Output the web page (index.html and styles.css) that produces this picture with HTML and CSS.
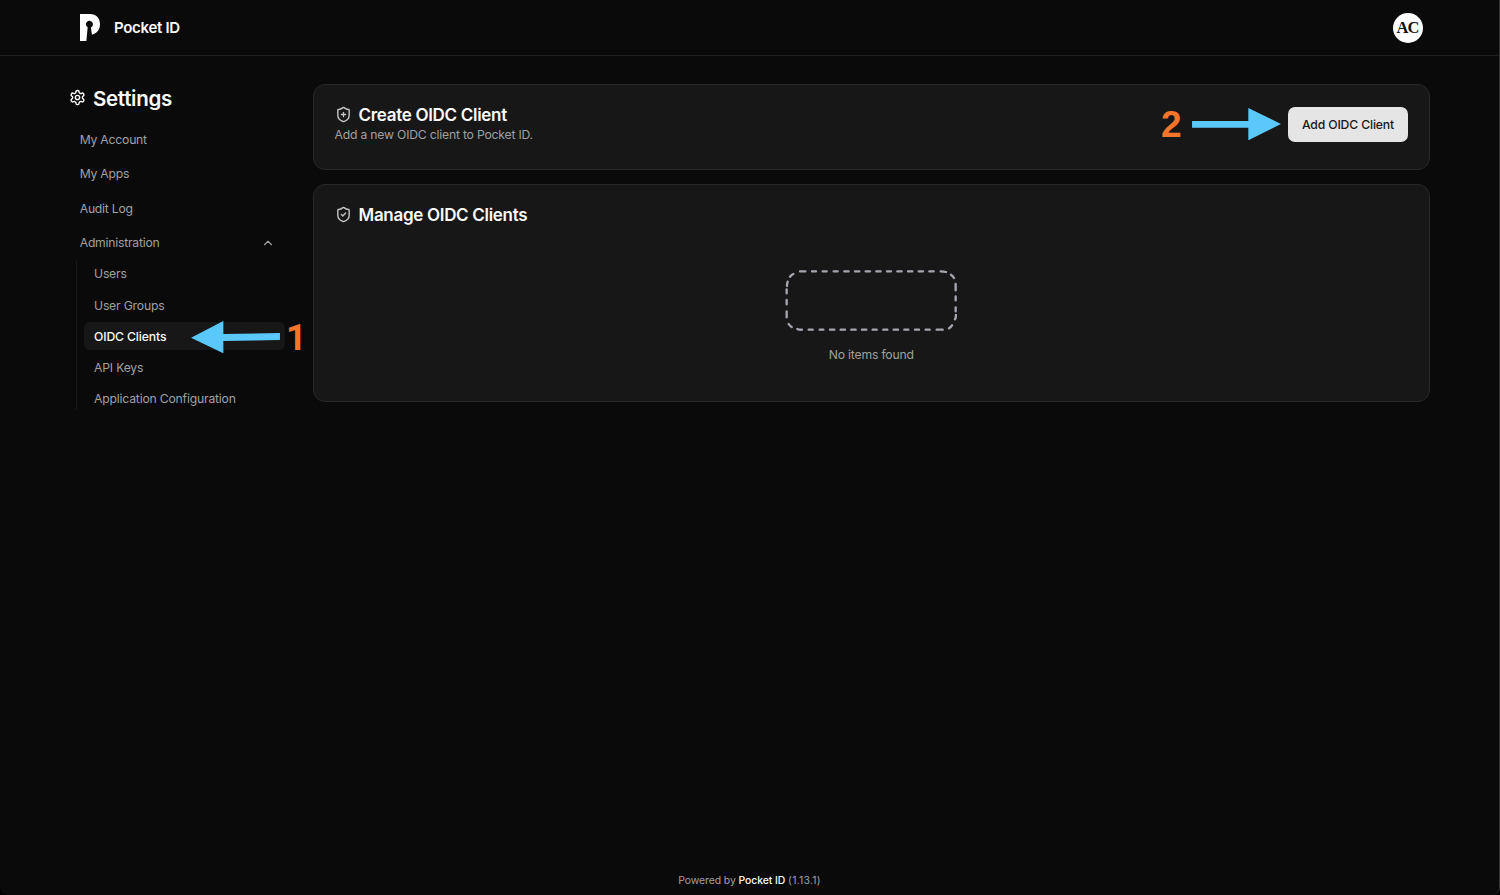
FILE: index.html
```html
<!DOCTYPE html>
<html lang="en">
<head>
<meta charset="utf-8">
<title>Pocket ID</title>
<link rel="stylesheet" href="styles.css">
</head>
<body>
<div class="app">
  <header class="topbar">
    <div class="brand">
      <svg class="logo" viewBox="0 0 60 82"><path fill="#fff" d="M0 0H29C50 0 60 13 60 31C60 47 51 59 36 62L32.500 40.500A10.500 10.500 0 1 0 23 40L19 82H0Z"/></svg>
      <span>Pocket ID</span>
    </div>
    <div class="avatar">AC</div>
  </header>
  <main class="content">
    <aside class="sidebar">
      <h1 class="heading">
        <svg class="icon gear" viewBox="0 0 24 24"><path d="M12.220 2h-.44a2 2 0 0 0-2 2v.18a2 2 0 0 1-1 1.730l-.43.25a2 2 0 0 1-2 0l-.15-.08a2 2 0 0 0-2.730.73l-.22.38a2 2 0 0 0 .73 2.730l.15.1a2 2 0 0 1 1 1.720v.51a2 2 0 0 1-1 1.740l-.15.09a2 2 0 0 0-.73 2.730l.22.38a2 2 0 0 0 2.730.73l.15-.08a2 2 0 0 1 2 0l.43.25a2 2 0 0 1 1 1.730V20a2 2 0 0 0 2 2h.44a2 2 0 0 0 2-2v-.18a2 2 0 0 1 1-1.730l.43-.25a2 2 0 0 1 2 0l.15.08a2 2 0 0 0 2.730-.73l.22-.39a2 2 0 0 0-.73-2.730l-.15-.08a2 2 0 0 1-1-1.740v-.5a2 2 0 0 1 1-1.740l.15-.09a2 2 0 0 0 .73-2.730l-.22-.38a2 2 0 0 0-2.730-.73l-.15.08a2 2 0 0 1-2 0l-.43-.25a2 2 0 0 1-1-1.730V4a2 2 0 0 0-2-2z"/><circle cx="12" cy="12" r="3"/></svg>
        <span>Settings</span>
      </h1>
      <nav class="menu">
        <a>My Account</a>
        <a>My Apps</a>
        <a>Audit Log</a>
        <a class="admin"><span>Administration</span><svg class="icon chevron" viewBox="0 0 24 24"><path d="m18 15-6-6-6 6"/></svg></a>
      </nav>
      <nav class="submenu">
        <a>Users</a>
        <a>User Groups</a>
        <a class="active">OIDC Clients</a>
        <a>API Keys</a>
        <a>Application Configuration</a>
      </nav>
    </aside>
    <div class="cards">
      <section class="card create">
        <div>
          <h2 class="title"><svg class="icon shield" viewBox="0 0 24 24"><path d="M20 13c0 5-3.500 7.500-7.660 8.950a1 1 0 0 1-.67-.01C7.500 20.500 4 18 4 13V6a1 1 0 0 1 1-1c2 0 4.500-1.200 6.240-2.720a1.170 1.170 0 0 1 1.520 0C14.510 3.810 17 5 19 5a1 1 0 0 1 1 1zM9 12h6M12 9v6"/></svg><span>Create OIDC Client</span></h2>
          <p class="description">Add a new OIDC client to Pocket ID.</p>
        </div>
        <button class="button">Add OIDC Client</button>
      </section>
      <section class="card manage">
        <h2 class="title"><svg class="icon shield" viewBox="0 0 24 24"><path d="M20 13c0 5-3.500 7.500-7.660 8.950a1 1 0 0 1-.67-.01C7.500 20.500 4 18 4 13V6a1 1 0 0 1 1-1c2 0 4.500-1.200 6.240-2.720a1.170 1.170 0 0 1 1.520 0C14.510 3.810 17 5 19 5a1 1 0 0 1 1 1zM9 12l2 2 4-4"/></svg><span>Manage OIDC Clients</span></h2>
        <div class="empty">
          <svg class="dashes" viewBox="45 42 516 189"><path d="M90 49H106M126 49H138M158 49H170M191 49H203M223 49H236M255 49H268M287 49H300M319 49H332M351 49H363M382 49H395M414 49H427M446 49H459M478 49H491M512 49Q521 49 528 51M543 59Q549 63 552 69M557 87V106M557 124V136M557 157V169M558 180Q558 187 555 193M546 211Q542 217 537 220M518 224H500M479 224H467M447 224H435M415 224H403M384 224H371M352 224H340M320 224H308M289 224H276M257 224H244M225 224H212M193 224H180M160 224H149M128 224H116M96 224Q88 225 82 222M65 216Q59 212 56 207M50 187V169M50 148V135M50 115V103M51 93Q51 86 53 80M60 65Q64 60 70 57"/></svg>
          <p>No items found</p>
        </div>
      </section>
    </div>
  </main>
  <footer class="footer">Powered by <b>Pocket ID</b> <span class="version">(1.13.1)</span></footer>
  <svg class="arrow arrow-one" viewBox="392 183 267 97"><path d="M392 233L489 183V222L659 219V240L489 243V280Z"/></svg>
  <span class="step step-one">1</span>
  <span class="step step-two">2</span>
  <svg class="arrow arrow-two" viewBox="126 99 267 97"><path d="M126 138H295V99L393 147L295 196V158H126Z"/></svg>
</div>
</body>
</html>
```
FILE: styles.css
```css
* { box-sizing: border-box; }
body { margin: 0; background: #000; font-family: Inter, sans-serif; color: #fafafa; }
h1, h2, p { margin: 0; }
.app { position: relative; height: 895px; display: flex; flex-direction: column; background: #0a0a0a; border-right: 1px solid #343434; border-radius: 0 0 8px 8px; overflow: hidden; }
.topbar { height: 56px; flex: none; border-bottom: 1px solid #1f1f1f; display: flex; align-items: center; justify-content: space-between; padding: 0 76.500px 0 80px; }
.brand { display: flex; align-items: center; gap: 14px; font-size: 15px; font-weight: 600; letter-spacing: -.3px; }
.logo { width: 20px; height: 27.300px; }
.avatar { width: 30px; height: 30px; border-radius: 50%; background: #fff; color: #111; display: grid; place-items: center; font: bold 16.500px "Liberation Serif", serif; letter-spacing: -.8px; }
.content { flex: 1; display: flex; padding: 28px 69px 0 69px; }
.sidebar { width: 216px; margin-right: 27.500px; flex: none; }
.heading { display: flex; align-items: center; gap: 7px; height: 28px; font-size: 20.500px; font-weight: 600; letter-spacing: -.3px; }
.icon { fill: none; stroke: currentColor; stroke-width: 2; stroke-linecap: round; stroke-linejoin: round; flex: none; }
.gear { width: 17px; height: 17px; margin-bottom: 1px; }
.menu { margin-top: 10px; color: #a1a1a1; font-size: 12.200px; letter-spacing: -.22px; }
.menu a { display: flex; align-items: center; height: 34.500px; padding-left: 10.700px; }
.menu .admin { justify-content: space-between; padding-right: 10.500px; }
.chevron { width: 14px; height: 14px; }
.submenu { margin: 1px 0 0 7px; border-left: 1px solid #1a1a1a; padding-left: 7px; display: grid; grid-template-rows: 27px repeat(3, 28px) 25px; gap: 3.150px; color: #a1a1a1; font-size: 12.200px; letter-spacing: -.19px; }
.submenu a { padding-left: 10px; display: flex; align-items: center; border-radius: 6px; }
.submenu a:first-child { padding-bottom: 2px; }
.submenu a:last-child { padding-top: 2px; }
.submenu .active { background: #171717; color: #fafafa; font-weight: 500; letter-spacing: -.12px; }
.cards { flex: 1; display: flex; flex-direction: column; gap: 14px; }
.card { background: #171717; border: 1px solid #282828; border-radius: 12px; padding: 20px 21px; }
.create { height: 86px; display: flex; justify-content: space-between; align-items: flex-start; }
.manage { height: 218px; }
.title { display: flex; align-items: center; gap: 7px; height: 20px; font-size: 17px; font-weight: 600; letter-spacing: -.3px; }
.shield { width: 17px; height: 17px; margin-bottom: 2px; color: #c4c4c4; }
.description { color: #a1a1a1; font-size: 12.200px; line-height: 20px; letter-spacing: -.2px; }
.button { width: 120px; height: 35px; margin-top: 2px; border: 0; border-radius: 7px; background: #e5e5e5; color: #171717; font: 500 12.200px Inter, sans-serif; padding: 0; letter-spacing: -.14px; }
.empty { margin-top: 44px; display: flex; flex-direction: column; align-items: center; color: #a1a1a1; font-size: 12.200px; line-height: 18px; gap: 14px; letter-spacing: -.18px; }
.dashes { width: 172px; height: 63px; margin-right: 1px; fill: none; stroke: #a6a6b0; stroke-width: 7; stroke-linecap: round; }
.footer { height: 29px; flex: none; text-align: center; font-size: 10.400px; line-height: 30px; color: #a1a1a1; letter-spacing: -.06px; }
.footer b { color: #fafafa; font-weight: 500; }
.version { letter-spacing: .25px; }
.arrow { position: absolute; width: 89px; height: 32.300px; fill: #5ac8fa; }
.arrow-one { left: 190.700px; top: 321px; }
.arrow-two { left: 1192px; top: 108px; }
.step { position: absolute; color: #f5752b; }
.step-one { left: 286px; top: 320px; font: bold 36px/36px Roboto, sans-serif; }
.step-two { left: 1161px; top: 106px; font: bold 37px/37px "Liberation Sans", sans-serif; }
```
